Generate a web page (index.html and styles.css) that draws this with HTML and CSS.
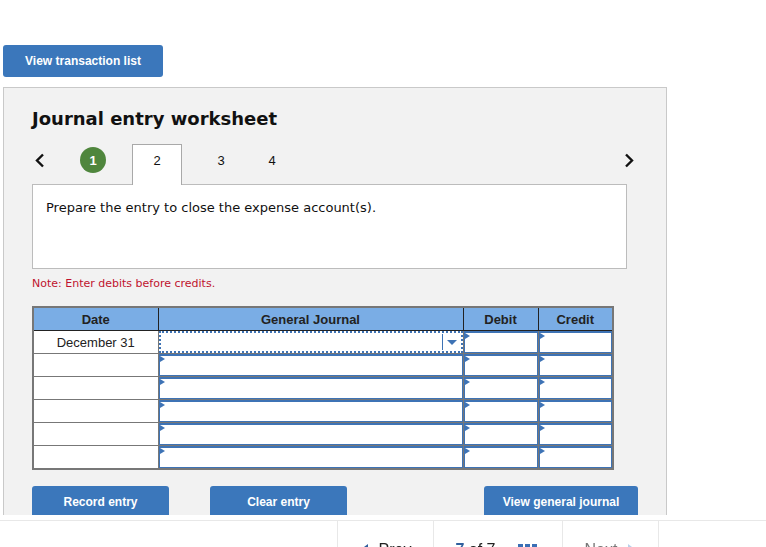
FILE: index.html
```html
<!DOCTYPE html>
<html lang="en">

<head>
    <meta charset="UTF-8">
    <meta name="viewport" content="width=device-width, initial-scale=1.0">
    <title>Journal entry worksheet</title>
    <link rel="stylesheet" href="styles.css">
</head>

<body>
    <button class="btn btn-top">View transaction list</button>

    <div class="panel">
        <h2 class="panel-title">Journal entry worksheet</h2>

        <div class="steps">
            <span class="step-arrow">
                <svg width="10" height="15" viewBox="0 0 10 15"><polyline points="8,1.5 2,7.5 8,13.5" fill="none" stroke="#111" stroke-width="2.4"/></svg>
            </span>
            <span class="step step-done">1</span>
            <span class="step step-active">2</span>
            <span class="step step-3">3</span>
            <span class="step step-4">4</span>
            <span class="step-arrow step-next">
                <svg width="10" height="15" viewBox="0 0 10 15"><polyline points="2,1.5 8,7.5 2,13.5" fill="none" stroke="#111" stroke-width="2.4"/></svg>
            </span>
        </div>

        <div class="question">
            <p>Prepare the entry to close the expense account(s).</p>
        </div>

        <p class="note">Note: Enter debits before credits.</p>

        <table class="journal">
            <colgroup>
                <col class="col-date">
                <col class="col-account">
                <col class="col-amount">
                <col class="col-amount">
            </colgroup>
            <thead>
                <tr>
                    <th>Date</th>
                    <th>General Journal</th>
                    <th>Debit</th>
                    <th>Credit</th>
                </tr>
            </thead>
            <tbody>
                <tr>
                    <td class="date">December 31</td>
                    <td class="entry"><div class="field field-focus"><span class="dropdown"></span></div></td>
                    <td class="entry"><div class="field mark"></div></td>
                    <td class="entry"><div class="field mark"></div></td>
                </tr>
                <tr>
                    <td class="date"></td>
                    <td class="entry"><div class="field mark"></div></td>
                    <td class="entry"><div class="field mark"></div></td>
                    <td class="entry"><div class="field mark"></div></td>
                </tr>
                <tr>
                    <td class="date"></td>
                    <td class="entry"><div class="field mark"></div></td>
                    <td class="entry"><div class="field mark"></div></td>
                    <td class="entry"><div class="field mark"></div></td>
                </tr>
                <tr>
                    <td class="date"></td>
                    <td class="entry"><div class="field mark"></div></td>
                    <td class="entry"><div class="field mark"></div></td>
                    <td class="entry"><div class="field mark"></div></td>
                </tr>
                <tr>
                    <td class="date"></td>
                    <td class="entry"><div class="field mark"></div></td>
                    <td class="entry"><div class="field mark"></div></td>
                    <td class="entry"><div class="field mark"></div></td>
                </tr>
                <tr>
                    <td class="date"></td>
                    <td class="entry"><div class="field mark"></div></td>
                    <td class="entry"><div class="field mark"></div></td>
                    <td class="entry"><div class="field mark"></div></td>
                </tr>
            </tbody>
        </table>

        <div class="actions">
            <button class="btn btn-action">Record entry</button>
            <button class="btn btn-action btn-clear">Clear entry</button>
            <button class="btn btn-action btn-wide">View general journal</button>
        </div>
    </div>

    <div class="footer">
        <div class="pager">
            <div class="pager-item">
                <svg width="9" height="12" viewBox="0 0 9 12"><polygon points="8,0 8,12 0,6" fill="#2f5f9e"/></svg>
                <span>Prev</span>
            </div>
            <div class="pager-item pager-pages">
                <span><b>7</b> of 7</span>
                <svg width="19" height="14" viewBox="0 0 19 14">
                    <rect x="0" y="0" width="5" height="5" fill="#3a6fb5"/>
                    <rect x="7" y="0" width="5" height="5" fill="#3a6fb5"/>
                    <rect x="14" y="0" width="5" height="5" fill="#3a6fb5"/>
                    <rect x="0" y="7" width="5" height="5" fill="#3a6fb5"/>
                    <rect x="7" y="7" width="5" height="5" fill="#3a6fb5"/>
                    <rect x="14" y="7" width="5" height="5" fill="#3a6fb5"/>
                </svg>
            </div>
            <div class="pager-item pager-next">
                <span>Next</span>
                <svg width="9" height="12" viewBox="0 0 9 12"><polygon points="1,0 1,12 9,6" fill="#b9d0ea"/></svg>
            </div>
        </div>
    </div>
</body>

</html>
```

FILE: styles.css
```css
body {
    margin: 0;
    padding: 45px 0 0 3px;
    font-family: "Liberation Sans", Arial, sans-serif;
    background-color: #fff;
    color: #222;
}

.btn {
    display: block;
    border: none;
    border-radius: 3px;
    background-color: #3b77bb;
    color: #fff;
    font-family: "Liberation Sans", Arial, sans-serif;
    font-size: 12px;
    font-weight: bold;
    cursor: pointer;
    padding: 0;
}

.btn-top {
    width: 160px;
    height: 32px;
}

/* worksheet panel */
.panel {
    box-sizing: border-box;
    width: 664px;
    margin-top: 10px;
    padding: 20px 0 40px 28px;
    background-color: #f2f2f2;
    border: 1px solid #c9c9c9;
}

.panel-title {
    margin: 0;
    font-family: "DejaVu Sans", Verdana, sans-serif;
    font-size: 18px;
    line-height: 22px;
    font-weight: bold;
    color: #111;
}

.steps {
    box-sizing: border-box;
    display: flex;
    align-items: center;
    width: 603px;
    height: 40px;
    margin-top: 14px;
    padding-bottom: 8px;
    font-size: 13px;
    color: #111;
}

.step-arrow {
    display: flex;
    align-items: center;
    margin-left: 3px;
    margin-top: 1px;
}

.step-next {
    margin-left: auto;
    margin-right: 1px;
}

.step {
    display: flex;
    align-items: center;
    justify-content: center;
}

.step-done {
    width: 26px;
    height: 26px;
    margin-left: 35px;
    border-radius: 50%;
    background-color: #4f863d;
    color: #fff;
    font-weight: bold;
}

.step-active {
    position: relative;
    z-index: 1;
    box-sizing: border-box;
    width: 50px;
    height: 41px;
    margin-left: 26px;
    align-self: flex-start;
    background-color: #fff;
    border: 1px solid #a9a9a9;
    border-bottom: none;
    padding-bottom: 9px;
}

.step-3 {
    width: 30px;
    margin-left: 24px;
}

.step-4 {
    width: 30px;
    margin-left: 21px;
}

.question {
    box-sizing: border-box;
    width: 595px;
    height: 85px;
    background-color: #fff;
    border: 1px solid #bcbcbc;
    padding: 15px 13px;
}

.question p {
    margin: 0;
    font-family: "DejaVu Sans", Verdana, sans-serif;
    font-size: 13px;
    line-height: 16px;
    color: #111;
}

.note {
    margin: 8px 0 15px;
    font-family: "DejaVu Sans", Verdana, sans-serif;
    font-size: 11px;
    line-height: 14px;
    color: #c0122e;
}

/* journal table */
.journal {
    width: 580px;
    table-layout: fixed;
    border-collapse: collapse;
    border: 2px solid #777;
}

.col-date {
    width: 125px;
}

.col-account {
    width: 305px;
}

.col-amount {
    width: 75px;
}

.journal th {
    height: 22px;
    padding: 0;
    background-color: #7aade5;
    border: 1px solid #222;
    border-top: 2px solid #777;
    font-size: 13px;
    font-weight: bold;
    color: #222;
}

.journal th:first-child {
    border-left: 2px solid #777;
}

.journal td {
    height: 22px;
    padding: 0;
    background-color: #fff;
    border: 1px solid #777;
}

.journal td.date {
    text-align: center;
    font-size: 13px;
    color: #222;
}

.field {
    position: relative;
    box-sizing: border-box;
    height: 22px;
    border: 1px solid #3e73b5;
    border-top-width: 2px;
}

.mark::before {
    content: "";
    position: absolute;
    left: 0;
    top: 0;
    border-left: 5px solid #3e73b5;
    border-top: 3px solid transparent;
    border-bottom: 3px solid transparent;
}

.field-focus {
    display: flex;
    justify-content: flex-end;
    align-items: stretch;
    border: 2px dotted #3e73b5;
    padding: 1px 0;
}

.dropdown {
    position: relative;
    width: 18px;
    border-left: 1px solid #3e73b5;
}

.dropdown::after {
    content: "";
    position: absolute;
    left: 4px;
    top: 6px;
    border-top: 5px solid #3e73b5;
    border-left: 5px solid transparent;
    border-right: 5px solid transparent;
}

/* bottom buttons */
.actions {
    display: flex;
    width: 606px;
    margin-top: 16px;
}

.btn-action {
    width: 137px;
    height: 32px;
}

.btn-clear {
    margin-left: 41px;
}

.btn-wide {
    width: 154px;
    margin-left: auto;
}

/* page navigation bar fixed at the bottom */
.footer {
    position: fixed;
    left: 0;
    right: 0;
    bottom: 0;
    height: 32px;
    padding-top: 5px;
    box-sizing: border-box;
    background-color: #fff;
}

.pager {
    display: flex;
    height: 100%;
    padding-left: 337px;
    border-top: 1px solid #e8e8e8;
}

.pager-item {
    box-sizing: border-box;
    display: flex;
    align-items: flex-start;
    justify-content: center;
    gap: 10px;
    width: 96px;
    padding-top: 20px;
    border-left: 1px solid #e8e8e8;
    font-size: 16px;
    line-height: 18px;
    color: #222;
}

.pager-item svg {
    margin-top: 3px;
}

.pager-pages {
    width: 129px;
    gap: 22px;
    padding-right: 4px;
}

.pager-pages b {
    color: #2f5f9e;
}

.pager-next {
    width: 97px;
    border-right: 1px solid #e8e8e8;
    color: #777;
}
```
